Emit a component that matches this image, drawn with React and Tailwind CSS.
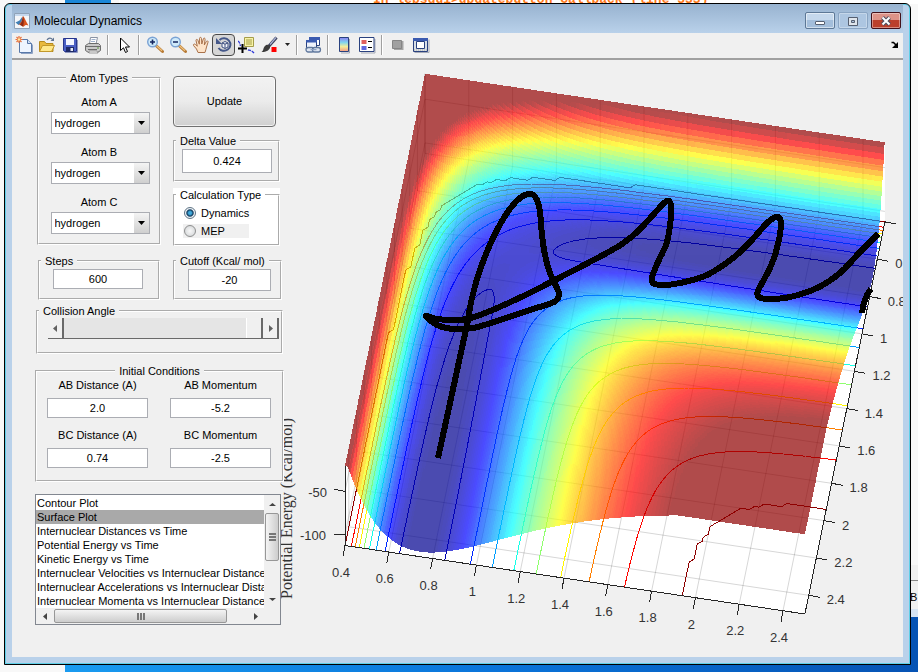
import React, { useMemo, useState } from 'react';

const atoms = ['hydrogen', 'fluorine', 'chlorine', 'iodine'];

const plots = [
  'Contour Plot',
  'Surface Plot',
  'Internuclear Distances vs Time',
  'Potential Energy vs Time',
  'Kinetic Energy vs Time',
  'Internuclear Velocities vs Internuclear Distance',
  'Internuclear Accelerations vs Internuclear Distance',
  'Internuclear Momenta vs Internuclear Distance',
];

// LEPS parameters for H + H2 (kcal/mol, angstrom)
const D = 106.5;
const BETA = 1.942;
const RE = 0.7414;
const SATO = 0.18;
const CUTOFF = -21;
const FLOOR = -112;
const RMIN = 0.4;
const RMAX = 2.5;

function bond(r) {
  const e1 = Math.exp(-BETA * (r - RE));
  const e2 = e1 * e1;
  const f = D / (4 * (1 + SATO));
  return [
    f * ((3 + SATO) * e2 - (2 + 6 * SATO) * e1),
    f * ((1 + 3 * SATO) * e2 - (6 + 2 * SATO) * e1),
  ];
}

function potential(x, y) {
  const [qa, ja] = bond(x);
  const [qb, jb] = bond(y);
  const [qc, jc] = bond(x + y);
  const j = Math.sqrt(((ja - jb) ** 2 + (jb - jc) ** 2 + (jc - ja) ** 2) / 2);
  return Math.min(qa + qb + qc - j, CUTOFF);
}

function project(x, y, z = FLOOR) {
  const u = x - RMIN;
  const v = RMAX - y;
  return [345 + 219 * u + 38.1 * v, 545.5 + 32.6 * u - 186.7 * v - 0.875 * (z - FLOOR)];
}

const pt = (x, y, z) => project(x, y, z).map((n) => n.toFixed(1)).join(' ');

function jet(t) {
  const c = (k) => Math.round(255 * Math.max(0, Math.min(1, 1.5 - Math.abs(4 * t - k))));
  return `rgb(${c(3)},${c(2)},${c(1)})`;
}

const shade = (z) => Math.max(0.016, Math.min(0.986, (z + D) / (CUTOFF + D)));

// cells of one row that share a colour are merged into one strip
function buildSurface(n) {
  const at = (i) => RMIN + ((RMAX - RMIN) * i) / n;
  const z = [];
  for (let j = 0; j <= n; j++) {
    z.push([]);
    for (let i = 0; i <= n; i++) z[j].push(potential(at(i), at(j)));
  }
  const bands = {};
  for (let j = 0; j < n; j++) {
    const key = (i) => Math.round(shade((z[j][i] + z[j][i + 1] + z[j + 1][i] + z[j + 1][i + 1]) / 4) * 127);
    let start = 0;
    while (start < n) {
      const k = key(start);
      let end = start + 1;
      while (end < n && key(end) === k) end++;
      const top = [];
      const bottom = [];
      for (let i = start; i <= end; i++) {
        top.push(pt(at(i), at(j), z[j][i]));
        bottom.unshift(pt(at(i), at(j + 1), z[j + 1][i]));
      }
      bands[k] = (bands[k] || '') + `M${top.join('L')}L${bottom.join('L')}Z`;
      start = end;
    }
  }
  return Object.entries(bands).map(([k, d]) => ({ color: jet(k / 127), d }));
}

const levels = [-102.2, -92.5, -82.5, -72.4, -62.4, -52.4, -42.3, -32.1, CUTOFF];

// marching squares on the floor plane
function buildContour(level, n) {
  const at = (i) => RMIN + ((RMAX - RMIN) * i) / n;
  let d = '';
  for (let j = 0; j < n; j++) {
    for (let i = 0; i < n; i++) {
      const c = [
        [at(i), at(j)],
        [at(i + 1), at(j)],
        [at(i + 1), at(j + 1)],
        [at(i), at(j + 1)],
      ];
      const v = c.map(([x, y]) => potential(x, y));
      const hits = [];
      for (let k = 0; k < 4; k++) {
        const m = (k + 1) % 4;
        if (v[k] >= level !== v[m] >= level) {
          const t = (level - v[k]) / (v[m] - v[k]);
          hits.push(pt(c[k][0] + t * (c[m][0] - c[k][0]), c[k][1] + t * (c[m][1] - c[k][1])));
        }
      }
      for (let k = 0; k + 1 < hits.length; k += 2) d += `M${hits[k]}L${hits[k + 1]}`;
    }
  }
  return { color: jet(shade(level)), d };
}

const ticks = [0.4, 0.6, 0.8, 1, 1.2, 1.4, 1.6, 1.8, 2, 2.2, 2.4];

const gridPath = [
  ...ticks.map((t) => `M${pt(t, RMAX)}L${pt(t, RMIN)}L${pt(t, RMIN, CUTOFF)}`),
  ...ticks.map((t) => `M${pt(RMAX, t)}L${pt(RMIN, t)}L${pt(RMIN, t, CUTOFF)}`),
  ...[-50, -100].map((z) => `M${pt(RMIN, RMAX, z)}L${pt(RMIN, RMIN, z)}L${pt(RMAX, RMIN, z)}`),
].join('');

const trajectory = [
  [438, 458], [450, 403], [463, 343], [467, 325], [472, 298], [480, 270], [493, 238], [507, 213],
  [520, 198], [531, 194], [537, 200], [540, 212], [542, 235], [545, 255], [550, 273], [557, 288],
  [559, 295], [554, 302], [530, 310], [497, 321], [473, 328], [453, 329], [437, 325], [426, 316],
  [437, 319], [460, 320], [480, 315], [517, 299], [557, 279], [603, 255], [622, 244], [637, 232],
  [653, 215], [664, 203], [669, 201], [671, 206], [671, 217], [667, 242], [658, 262], [652, 277],
  [653, 283], [662, 285], [680, 283], [707, 275], [733, 258], [750, 242], [767, 223], [776, 217],
  [780, 219], [781, 227], [777, 248], [770, 268], [758, 291], [759, 297], [768, 299], [790, 297],
  [817, 288], [840, 273], [860, 252], [878, 234],
];

function smooth(p) {
  let d = `M${p[0]}`;
  for (let i = 0; i < p.length - 1; i++) {
    const a = p[i - 1] || p[i];
    const b = p[i];
    const c = p[i + 1];
    const e = p[i + 2] || c;
    d += `C${b[0] + (c[0] - a[0]) / 6} ${b[1] + (c[1] - a[1]) / 6} ${c[0] - (e[0] - b[0]) / 6} ${c[1] - (e[1] - b[1]) / 6} ${c[0]} ${c[1]}`;
  }
  return d;
}

function SurfacePlot() {
  const surface = useMemo(() => buildSurface(260), []);
  const contours = useMemo(() => levels.map((l) => buildContour(l, 105)), []);
  return (
    <svg
      viewBox="284 60 619 597"
      preserveAspectRatio="xMinYMin meet"
      className="block w-full h-full overflow-visible"
      role="img"
      aria-label="Potential energy surface"
    >
      <path
        d={`M${pt(RMIN, RMAX)}L${pt(RMIN, RMAX, CUTOFF)}L${pt(RMIN, RMIN, CUTOFF)}L${pt(RMAX, RMIN, CUTOFF)}L${pt(RMAX, RMIN)}L${pt(RMAX, RMAX)}Z`}
        fill="#fff"
      />
      <path d={gridPath} fill="none" stroke="#000" strokeOpacity="0.16" />
      <g fill="none" shapeRendering="crispEdges">
        {contours.map((c, i) => (
          <path key={i} d={c.d} stroke={c.color} />
        ))}
      </g>
      <g opacity="0.7" shapeRendering="crispEdges">
        {surface.map((b) => (
          <path key={b.color} d={b.d} fill={b.color} />
        ))}
      </g>
      <g fill="none" stroke="#262626" shapeRendering="crispEdges">
        <path d={`M${pt(RMIN, RMAX, CUTOFF)}L${pt(RMIN, RMAX)}L${pt(RMAX, RMAX)}L${pt(RMAX, RMIN)}`} />
        {ticks.map((t) => (
          <path key={t} d={`M${pt(t, RMAX)}l-2 11M${pt(RMAX, t)}l11 2`} />
        ))}
        <path d={`M${pt(RMIN, RMAX, -50)}l-11 -2M${pt(RMIN, RMAX, -100)}l-11 -1`} />
      </g>
      <g fill="none" stroke="#000" strokeWidth="6" strokeLinejoin="round" shapeRendering="crispEdges">
        <path d={smooth(trajectory)} />
        <path d="M871 289Q864 297 862 313" />
      </g>
      <g fill="#333" fontSize="13" fontFamily="'Liberation Sans', Arial, sans-serif">
        {ticks.map((t) => {
          const [x, y] = project(t, RMAX);
          return (
            <text key={t} x={x - 4} y={y + 31} textAnchor="middle">
              {t}
            </text>
          );
        })}
        {ticks.map((t) => {
          const [x, y] = project(RMAX, t);
          return (
            <text key={t} x={x + 18} y={y + 9}>
              {t}
            </text>
          );
        })}
        <text x="327" y="497" textAnchor="end">-50</text>
        <text x="326" y="540" textAnchor="end">-100</text>
      </g>
      <text
        transform="translate(292 599) rotate(-90)"
        fontSize="16"
        fill="#333"
        fontFamily="'Liberation Serif', 'Times New Roman', serif"
      >
        Potential Energy (Kcal/mol)
      </text>
    </svg>
  );
}

const icons = {
  new: (
    <>
      <path d="M4.500 3.500h8l4 4v9h-12z" fill="#eef5ff" stroke="#5878a8" />
      <path d="M12.500 3.500v4h4" fill="#cfe0f8" stroke="#5878a8" />
      <path d="M6 17.500h11.500v-9" fill="none" stroke="#8fa3c4" />
      <path d="M4 0v7M.5 3.500h7M1.500 1l5 5M6.500 1l-5 5" stroke="#e8703a" strokeWidth="1.200" />
      <circle cx="4" cy="3.500" r="1.300" fill="#ffe9a0" />
    </>
  ),
  open: (
    <>
      <path d="M1.500 15.500v-10h5l1.500 2h7v8z" fill="#e9b93c" stroke="#b58a1c" />
      <path d="M1.500 15.500l3-6h12l-3 6z" fill="#ffe88a" stroke="#c2982a" />
      <path d="M9 4c1.500-2.500 4-2.500 5.500-.5" fill="none" stroke="#5f7391" strokeWidth="1.200" />
      <path d="M16 1.500v3.500h-3.500z" fill="#5f7391" />
    </>
  ),
  save: (
    <>
      <path d="M2.500 2.500h13v13h-12l-1-1z" fill="#4a5fc4" stroke="#27358c" />
      <path d="M5 3h8v6H5z" fill="#f2f5ff" />
      <path d="M5 11h8v5H5z" fill="#1e2a68" />
      <path d="M9.500 12h2.500v3H9.500z" fill="#e6e9f4" />
      <path d="M16.500 4v12.500H4" fill="none" stroke="#8f98c0" />
    </>
  ),
  print: (
    <>
      <path d="M5.500 8l1-6.500h7l-1.500 6.500z" fill="#fff" stroke="#8a93a3" />
      <path d="M7.500 3.500h4M7 5.500h4" stroke="#9fb1cc" />
      <path d="M1.500 9.500l3-2h10l2 2v5l-3 2h-9l-3-2z" fill="#c9c9c9" stroke="#6d6d6d" />
      <path d="M2 10.500h14M4 13.500h9" stroke="#6d6d6d" />
      <path d="M5 15h8l1 2H5z" fill="#f5f5f5" stroke="#777" strokeWidth=".7" />
      <path d="M13 12h2" stroke="#5d9b3f" />
    </>
  ),
  pointer: <path d="M5.500 2v12.500l3-2.700 2 4.700 2-1-2-4.500h4z" fill="#fff" stroke="#000" />,
  zoomIn: (
    <>
      <path d="M10.500 10l6 5.500" stroke="#b77a35" strokeWidth="3" strokeLinecap="round" />
      <path d="M10.500 9.700l5.500 5" stroke="#f0c27c" strokeWidth="1.200" />
      <circle cx="6.500" cy="6" r="4.800" fill="#cfeafa" stroke="#7ba3d4" strokeWidth="1.400" />
      <path d="M6.500 3.500v5M4 6h5" stroke="#13245e" strokeWidth="1.600" />
    </>
  ),
  zoomOut: (
    <>
      <path d="M10.500 10l6 5.500" stroke="#b77a35" strokeWidth="3" strokeLinecap="round" />
      <path d="M10.500 9.700l5.500 5" stroke="#f0c27c" strokeWidth="1.200" />
      <circle cx="6.500" cy="6" r="4.800" fill="#cfeafa" stroke="#7ba3d4" strokeWidth="1.400" />
      <path d="M4 6h5" stroke="#13245e" strokeWidth="1.600" />
    </>
  ),
  hand: (
    <path
      d="M6 16.500L4.500 13 1.500 9.500C1 8 2.500 7.500 3.500 8.500l1.800 1.700L4 4.500c0-1.500 1.500-1.500 2 0l1.300 3.700L7.500 2.500c0-1.500 1.900-1.500 2 0l.3 5.500 1.500-5c.5-1.500 2-1 1.800.4L12.300 9l2-3.500c.8-1.200 2.200-.5 1.700.8L14.500 11c-.3 2-1 3.500-1.500 5.500z"
      fill="#fde3c8"
      stroke="#a9714a"
    />
  ),
  rotate: (
    <>
      <path d="M4.500 4A6.500 6.200 0 1 1 3.500 12" fill="none" stroke="#45588a" strokeWidth="2" />
      <path d="M1 2v6h6z" fill="#45588a" />
      <path d="M7 7l3-1.500L13 7v4l-3 1.500L7 11zM7 7l3 1.200L13 7M10 8.200v4" fill="#f3f6fc" stroke="#3e5080" />
    </>
  ),
  cursor: (
    <>
      <path d="M0 5c1.500 1 2 3 2.500 5M10 14c2 .5 4 .5 6 3" stroke="#2d36d8" strokeWidth="1.300" strokeDasharray="3 1" fill="none" />
      <path d="M6.500 1.500h9v9h-9z" fill="#f7f3a6" stroke="#a59c4a" />
      <path d="M8 4h6M8 6h6M8 8h6" stroke="#a59c4a" />
      <path d="M4.500 8v9M0 12.500h9" stroke="#000" strokeWidth="2" />
    </>
  ),
  brush: (
    <>
      <path d="M8 10l7.500-8.500" stroke="#3a3f58" strokeWidth="3" />
      <path d="M9 8.500l6-7" stroke="#aab4d8" strokeWidth="1.200" />
      <path d="M8.500 9.500c1.500 1.500 0 4-2 5.200-2 1.200-4.500 1.500-6 1.300C2.500 15 2 12.500 3.500 10.500c1.500-2 3.500-2.200 5-1z" fill="#3c3c3c" />
      <path d="M10.500 11h5v5h-5z" fill="#f00" />
    </>
  ),
  link: (
    <>
      <path d="M5.500 1.500h10v8h-10z" fill="#fff" stroke="#29417f" />
      <path d="M5 1h11v3H5z" fill="#3b5bb0" />
      <path d="M2.500 4.500h10v8h-10z" fill="#eef2fb" stroke="#29417f" />
      <path d="M2 4h11v2.500H2z" fill="#3b5bb0" />
      <rect x="2" y="11.500" width="8" height="4.500" rx="2.200" fill="#dfe6f1" stroke="#60789d" strokeWidth="1.300" />
      <rect x="8.500" y="11.500" width="8" height="4.500" rx="2.200" fill="#dfe6f1" stroke="#60789d" strokeWidth="1.300" />
      <path d="M6.500 13.700h6" stroke="#8fa3c4" strokeWidth="1.300" />
    </>
  ),
  colorbar: (
    <>
      <defs>
        <linearGradient id="bar" x1="0" y1="0" x2="0" y2="1">
          <stop offset="0" stopColor="#8b7df0" />
          <stop offset=".35" stopColor="#7fd4f0" />
          <stop offset=".65" stopColor="#f4ee9a" />
          <stop offset="1" stopColor="#f29a86" />
        </linearGradient>
      </defs>
      <path d="M14.500 3v14H6" fill="none" stroke="#a5a9b5" />
      <path d="M4.500 1.500h9v14h-9z" fill="url(#bar)" stroke="#29417f" />
    </>
  ),
  legend: (
    <>
      <path d="M17 3v14H3" fill="none" stroke="#a5a9b5" />
      <path d="M1.500 1.500h14.500v14H1.500z" fill="#fff" stroke="#29417f" />
      <path d="M3.500 4h5v4h-5z" fill="#e0605e" />
      <path d="M3.500 10h5v4h-5z" fill="#6068e0" />
      <path d="M10 5.500h4M10 11.500h4" stroke="#000" />
    </>
  ),
  hide: (
    <>
      <path d="M5 5h9.500v9H5z" fill="#a4a4a4" />
      <path d="M3.500 4.500h9v8h-9z" fill="#a0a0a0" stroke="#858585" />
    </>
  ),
  show: (
    <>
      <path d="M17 3.500v13H2.500" fill="none" stroke="#a5a9b5" />
      <path d="M1.500 2.500h14v13h-14z" fill="#d8dfe6" stroke="#29417f" />
      <path d="M1 2h15v3H1z" fill="#3b5bb0" />
      <path d="M4.500 5.500h8v7h-8z" fill="#fff" stroke="#29417f" />
      <path d="M2 14h13" stroke="#b9b29e" strokeDasharray="1 1" />
    </>
  ),
};

function ToolButton({ name, label, pressed }) {
  return (
    <button
      type="button"
      aria-label={label}
      aria-pressed={pressed}
      className={
        pressed
          ? 'w-[23px] h-[22px] flex items-center justify-center rounded-sm border border-[#4a4a4a] bg-[#d6d6d6]'
          : 'w-[23px] h-[22px] flex items-center justify-center'
      }
    >
      <svg width="18" height="18" viewBox="0 0 18 18" className="shrink-0" fill="none">
        {icons[name]}
      </svg>
    </button>
  );
}

function Separator() {
  return (
    <div className="w-2 flex justify-center">
      <div className="h-5 w-[2px] bg-[#a0a0a0] border-r border-white" />
    </div>
  );
}

function Toolbar() {
  return (
    <div className="h-[27px] flex items-center border-b-2 border-[#a0a0a0] bg-[#f0f0f0] pb-[2px]">
      <ToolButton name="new" label="New Figure" />
      <ToolButton name="open" label="Open File" />
      <ToolButton name="save" label="Save Figure" />
      <ToolButton name="print" label="Print Figure" />
      <Separator />
      <ToolButton name="pointer" label="Edit Plot" />
      <Separator />
      <ToolButton name="zoomIn" label="Zoom In" />
      <ToolButton name="zoomOut" label="Zoom Out" />
      <ToolButton name="hand" label="Pan" />
      <ToolButton name="rotate" label="Rotate 3D" pressed />
      <ToolButton name="cursor" label="Data Cursor" />
      <ToolButton name="brush" label="Brush" />
      <button type="button" aria-label="Brush colors" className="w-3 h-5 flex items-center justify-center">
        <svg width="5" height="3" viewBox="0 0 5 3">
          <path d="M0 0h5L2.500 3z" fill="#222" />
        </svg>
      </button>
      <Separator />
      <ToolButton name="link" label="Link Plot" />
      <Separator />
      <ToolButton name="colorbar" label="Insert Colorbar" />
      <ToolButton name="legend" label="Insert Legend" />
      <Separator />
      <ToolButton name="hide" label="Hide Plot Tools" />
      <ToolButton name="show" label="Show Plot Tools" />
      <button type="button" aria-label="Dock Figure" className="ml-auto mr-1 h-5 flex items-center">
        <svg width="8" height="8" viewBox="0 0 8 8">
          <path d="M.5 1.500h2L5 4" stroke="#000" strokeWidth="1.600" fill="none" />
          <path d="M7 1v6H1z" fill="#000" />
        </svg>
      </button>
    </div>
  );
}

function TitleBar() {
  return (
    <header className="h-[29px] flex items-center px-[2px] pt-1 bg-linear-to-b from-[#98b3d0] to-[#b9d1ea]">
      <svg width="16" height="16" viewBox="0 0 16 16">
        <path d="M.5.5h15v15H.5z" fill="#f4f6f9" stroke="#8fa2b8" />
        <path d="M1 1h14v2H1z" fill="#c4d8ee" />
        <path d="M1.500 9.500l4-2 3-4-1 6.500-3 2z" fill="#3f7fb5" />
        <path d="M4.500 12l3-3.500 1.500-5.500c2 2 3 6 5.500 9.500-2-1-3-1-5.500 1.500-1-1.500-2.500-2.500-4.500-2z" fill="#d9541e" />
        <path d="M9 3c-.5 4-1.500 7-3 9l3 1.500c1-3 1-7 0-10.500z" fill="#8c2a14" />
      </svg>
      <h1 className="ml-1 text-xs leading-4 text-black">Molecular Dynamics</h1>
      <div className="ml-auto flex gap-[3px]">
        <button type="button" aria-label="Minimize" className="w-[30px] h-[17px] flex items-center justify-center rounded-xs border border-[#5d7896] bg-linear-to-b from-[#c5d8ec] from-50% to-[#a3bedb] to-50% inset-ring inset-ring-white/50">
          <svg width="12" height="12" viewBox="0 0 12 12">
            <rect x="1.500" y="6.500" width="9" height="3" rx=".5" fill="#fff" stroke="#555f70" />
          </svg>
        </button>
        <button type="button" aria-label="Maximize" className="w-[30px] h-[17px] flex items-center justify-center rounded-xs border border-[#8aa5c3] bg-[#adc6e1] inset-ring inset-ring-white/30">
          <svg width="12" height="12" viewBox="0 0 12 12">
            <path d="M1.500 2.500h9v8h-9z" fill="#dfe5ec" stroke="#555f70" />
            <path d="M4.500 5.500h3v2h-3z" fill="#a9c0da" stroke="#555f70" />
          </svg>
        </button>
        <button type="button" aria-label="Close" className="w-[30px] h-[17px] flex items-center justify-center rounded-xs border border-[#43111a] bg-linear-to-b from-[#dd9388] from-50% to-[#bb3f2b] to-50% inset-ring inset-ring-white/40">
          <svg width="12" height="12" viewBox="0 0 12 12">
            <path d="M2.500 2.500l7 7M9.500 2.500l-7 7" stroke="#4a5060" strokeWidth="4" />
            <path d="M2.500 2.500l7 7M9.500 2.500l-7 7" stroke="#fff" strokeWidth="2" />
          </svg>
        </button>
      </div>
    </header>
  );
}

function Panel({ title, center, white, className = '', children }) {
  return (
    <fieldset
      className={`min-w-0 border-2 [border-style:groove] border-white ${white ? 'bg-white' : 'bg-[#f0f0f0]'} ${className}`}
    >
      <legend className={`px-1 leading-[14px] whitespace-nowrap ${white ? 'bg-white' : 'bg-[#f0f0f0]'} ${center ? 'mx-auto' : 'ml-[1px]'}`}>
        {title}
      </legend>
      {children}
    </fieldset>
  );
}

function TextBox({ className = '', ...props }) {
  return (
    <input
      type="text"
      className={`block min-w-0 border border-[#abadb3] bg-white text-center text-black outline-none ${className}`}
      {...props}
    />
  );
}

function AtomSelect({ id, label }) {
  return (
    <div className="flex flex-col items-center gap-[3px]">
      <label htmlFor={id} className="leading-[14px]">
        {label}
      </label>
      <div className="grid w-[99px] h-[22px] ml-[2px]">
        <select
          id={id}
          className="col-start-1 row-start-1 appearance-none border border-[#abadb3] bg-white pl-[3px] text-black outline-none"
        >
          {atoms.map((a) => (
            <option key={a}>{a}</option>
          ))}
        </select>
        <div className="col-start-1 row-start-1 justify-self-end my-[1px] mr-[1px] w-[15px] flex items-center justify-center bg-linear-to-b from-[#f4f4f4] to-[#cfcfcf] pointer-events-none">
          <svg width="7" height="4" viewBox="0 0 7 4">
            <path d="M0 0h7L3.500 4z" fill="#000" />
          </svg>
        </div>
      </div>
    </div>
  );
}

function Radio({ label, checked, onChange, className = '' }) {
  return (
    <label className={`flex items-center gap-[5px] h-[14px] pl-[1px] ${className}`}>
      <input
        type="radio"
        name="calculation"
        checked={checked}
        onChange={onChange}
        className="appearance-none size-3 shrink-0 rounded-full border border-[#8e8f8f] bg-radial from-[#f8f8f8] to-[#cfd2d4] checked:border-[#5f7486] checked:from-[#3fa9dc] checked:from-20% checked:via-[#0e3a5c] checked:via-45% checked:to-[#eef2f5] checked:to-60%"
      />
      {label}
    </label>
  );
}

function Triangle({ dir, color = '#444' }) {
  const d = {
    left: 'M5 0v7L1 3.500z',
    right: 'M2 0v7l4-3.500z',
    up: 'M0 5h7L3.500 2z',
    down: 'M0 2h7L3.500 5z',
  };
  return (
    <svg width="7" height="7" viewBox="0 0 7 7">
      <path d={d[dir]} fill={color} />
    </svg>
  );
}

function PlotList() {
  const [selected, setSelected] = useState(1);
  return (
    <div className="grid grid-cols-[minmax(0,1fr)_16px] grid-rows-[113px_16px] w-[246px] border border-[#828790] bg-white">
      <ul role="listbox" aria-label="Plot type" className="overflow-hidden pt-[1px]">
        {plots.map((p, i) => (
          <li
            key={p}
            role="option"
            aria-selected={i === selected}
            onClick={() => setSelected(i)}
            className={
              i === selected
                ? 'h-[14px] leading-[14px] pl-[1px] whitespace-nowrap bg-[#a9a9a9]'
                : 'h-[14px] leading-[14px] pl-[1px] whitespace-nowrap'
            }
          >
            {p}
          </li>
        ))}
      </ul>
      <div className="flex flex-col items-center bg-[#f0f0f0]">
        <button type="button" aria-label="Scroll up" className="h-[18px]">
          <Triangle dir="up" />
        </button>
        <div className="w-[14px] h-12 flex flex-col items-center justify-center gap-[1px] rounded-xs border border-[#979797] bg-linear-to-r from-[#f4f4f4] to-[#cdcdcd]">
          <div className="w-[7px] h-[2px] bg-[#777]" />
          <div className="w-[7px] h-[2px] bg-[#777]" />
          <div className="w-[7px] h-[2px] bg-[#777]" />
        </div>
        <button type="button" aria-label="Scroll down" className="mt-auto h-[18px]">
          <Triangle dir="down" />
        </button>
      </div>
      <div className="flex items-center bg-[#f0f0f0]">
        <button type="button" aria-label="Scroll left" className="w-[18px] flex justify-center">
          <Triangle dir="left" />
        </button>
        <div className="w-[173px] h-[14px] flex items-center justify-center gap-[1px] rounded-xs border border-[#979797] bg-linear-to-b from-[#f4f4f4] to-[#cdcdcd]">
          <div className="w-[2px] h-[7px] bg-[#777]" />
          <div className="w-[2px] h-[7px] bg-[#777]" />
          <div className="w-[2px] h-[7px] bg-[#777]" />
        </div>
        <button type="button" aria-label="Scroll right" className="ml-auto w-[18px] flex justify-center">
          <Triangle dir="right" />
        </button>
      </div>
      <div className="bg-[#f0f0f0]" />
    </div>
  );
}

function Sidebar() {
  const [mode, setMode] = useState('Dynamics');
  return (
    <aside className="relative z-10 w-[249px] shrink-0 ml-[23px] pt-[11px] text-[11px] text-black">
      <div className="flex gap-3 px-[2px]">
        <Panel title="Atom Types" center className="w-[124px] h-[174px]">
          <div className="flex flex-col gap-[11px] pt-[10px]">
            <AtomSelect id="atom-a" label="Atom A" />
            <AtomSelect id="atom-b" label="Atom B" />
            <AtomSelect id="atom-c" label="Atom C" />
          </div>
        </Panel>
        <div className="flex flex-col w-[107px] pt-[5px]">
          <button
            type="button"
            className="w-[103px] h-[51px] rounded-sm border border-[#707070] bg-linear-to-b from-[#f2f2f2] via-[#ebebeb] via-50% to-[#cfcfcf] inset-ring inset-ring-white/70"
          >
            Update
          </button>
          <Panel title="Delta Value" className="mt-[7px] h-[48px]">
            <TextBox aria-label="Delta Value" defaultValue="0.424" className="mt-[1px] ml-[7px] w-[90px] h-6" />
          </Panel>
          <div className="mt-[6px] bg-white">
            <Panel title="Calculation Type" white className="h-[58px]">
              <div className="flex flex-col gap-1 pl-2 pt-1">
                <Radio label="Dynamics" checked={mode === 'Dynamics'} onChange={() => setMode('Dynamics')} />
                <Radio label="MEP" checked={mode === 'MEP'} onChange={() => setMode('MEP')} className="w-[66px] bg-[#f0f0f0]" />
              </div>
            </Panel>
          </div>
        </div>
      </div>
      <div className="flex gap-[13px] mt-2 pl-[3px] pr-[2px]">
        <Panel title="Steps" className="w-[122px] h-[46px]">
          <TextBox aria-label="Steps" defaultValue="600" className="mt-[1px] ml-[13px] w-[90px] h-5" />
        </Panel>
        <Panel title="Cutoff (Kcal/ mol)" className="w-[109px] h-[46px]">
          <TextBox aria-label="Cutoff" defaultValue="-20" className="mt-[1px] ml-[13px] w-[83px] h-[22px]" />
        </Panel>
      </div>
      <Panel title="Collision Angle" className="mt-1 mx-[1px] h-[50px]">
        <div className="flex ml-[10px] mr-[2px] h-[21px] border-b border-[#696969] bg-[#e5e5e5]">
          <button type="button" aria-label="Decrease angle" className="w-4 flex items-center justify-center bg-[#f0f0f0] border-r-2 border-[#696969]">
            <Triangle dir="left" color="#606060" />
          </button>
          <input
            type="range"
            aria-label="Collision Angle"
            min="0"
            max="180"
            defaultValue="180"
            className="appearance-none min-w-0 flex-1 h-full bg-transparent [&::-webkit-slider-thumb]:appearance-none [&::-webkit-slider-thumb]:w-[17px] [&::-webkit-slider-thumb]:h-5 [&::-webkit-slider-thumb]:bg-[#f0f0f0] [&::-webkit-slider-thumb]:border-r-2 [&::-webkit-slider-thumb]:border-l [&::-webkit-slider-thumb]:border-l-white [&::-webkit-slider-thumb]:border-r-[#696969]"
          />
          <button type="button" aria-label="Increase angle" className="w-4 flex items-center justify-center bg-[#f0f0f0] border-r-2 border-[#696969]">
            <Triangle dir="right" color="#606060" />
          </button>
        </div>
      </Panel>
      <Panel title="Initial Conditions" center className="mt-[10px] h-[118px]">
        <div className="grid grid-cols-[101px_101px] gap-x-[22px] gap-y-[10px] pl-[10px]">
          {[
            ['AB Distance (A)', '2.0'],
            ['AB Momentum', '-5.2'],
            ['BC Distance (A)', '0.74'],
            ['BC Momentum', '-2.5'],
          ].map(([label, value]) => (
            <label key={label} className="flex flex-col items-center gap-[6px] leading-[14px]">
              {label}
              <TextBox defaultValue={value} className="w-full h-5" />
            </label>
          ))}
        </div>
      </Panel>
      <div className="mt-3">
        <PlotList />
      </div>
    </aside>
  );
}

function Desktop() {
  return (
    <div aria-hidden="true" className="absolute inset-0 overflow-hidden bg-[#f8f8f8]">
      <div className="absolute top-0 left-[65px] w-[46px] h-1 bg-[#1a87d8]" />
      <div className="absolute top-0 left-[119px] right-0 h-1 bg-white" />
      <div className="absolute -top-2 left-[373px] whitespace-nowrap font-['Liberation_Mono'] text-[13px] leading-4 font-bold text-[#ff7a1a]">
        In lepsgui&gt;updatebutton Callback (line 333)
      </div>
      <div className="absolute top-[565px] right-0 bottom-0 w-2 flex flex-col bg-[#f0f0f0] text-[11px] leading-4">
        <div className="h-4 border-b border-[#888]" />
        <div className="mt-2 h-5 text-black">B</div>
        <div className="h-2 bg-[#d6e4f3]" />
        <div className="flex-1 bg-[#0653b4]" />
      </div>
      <div className="absolute bottom-0 left-[65px] right-0 h-2 bg-linear-to-r from-[#1a9bf0] via-[#0a74da] to-[#0653b4]" />
    </div>
  );
}

function App() {
  return (
    <div className="relative h-screen min-h-[600px] flex overflow-hidden pt-[3px] pl-1 pr-[7px] pb-[7px] font-['Liberation_Sans',Arial,sans-serif]">
      <Desktop />
      <main className="relative flex-1 min-w-0 flex flex-col rounded-t-md border border-black bg-[#b9d1ea] pl-[7px] pr-[7px] pb-[7px] overflow-hidden inset-ring inset-ring-[#5fd0e8]">
        <TitleBar />
        <div className="flex-1 min-h-0 flex flex-col bg-[#f0f0f0] overflow-hidden">
          <Toolbar />
          <div className="flex-1 min-h-0 flex">
            <Sidebar />
            <div className="flex-1 min-w-0">
              <SurfacePlot />
            </div>
          </div>
        </div>
      </main>
    </div>
  );
}

export default App;
